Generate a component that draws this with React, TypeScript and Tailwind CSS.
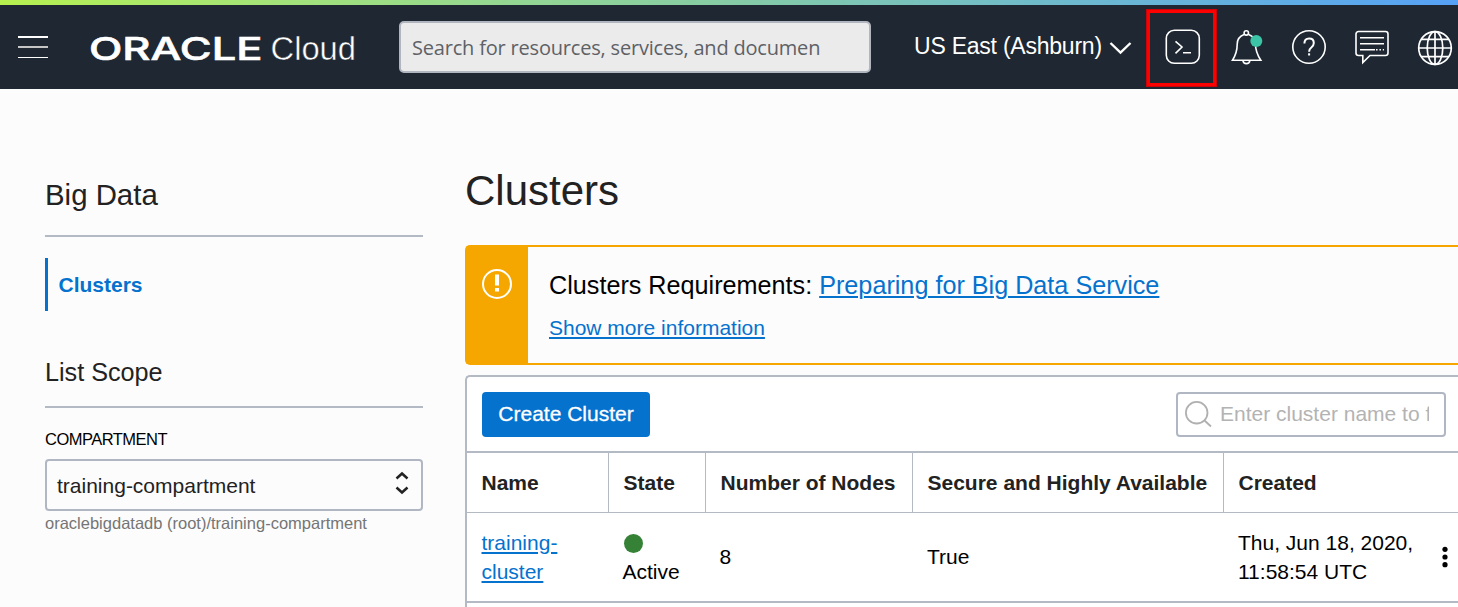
import type { ReactNode } from 'react';

function OracleLogo() {
  return (
    <svg width="268" height="36" viewBox="0 0 268 36" fill="#ffffff" role="img" aria-label="Oracle Cloud" className="shrink-0">
      <text x="-1" y="30.500" fontFamily="Inter, sans-serif" fontWeight="500" fontSize="31" stroke="#ffffff" strokeWidth="0.600" textLength="173.500" lengthAdjust="spacingAndGlyphs">
        ORACLE
      </text>
      <text x="180.500" y="30.800" fontFamily="'Liberation Sans', sans-serif" fontSize="34" stroke="#1e2732" strokeWidth="0.500" textLength="85.500" lengthAdjust="spacingAndGlyphs">
        Cloud
      </text>
    </svg>
  );
}

function TerminalIcon() {
  return (
    <svg width="36" height="36" viewBox="0 0 36 36" fill="none" stroke="#ffffff" strokeWidth="1.6">
      <rect x="1.3" y="1.3" width="33" height="33" rx="8" />
      <path d="M10.5 12.3 17 18 10.5 24.4M18 23.8h8" />
    </svg>
  );
}

function BellIcon() {
  return (
    <svg width="34" height="36" viewBox="0 0 34 36" fill="none" stroke="#ffffff" strokeWidth="1.6">
      <circle cx="16.3" cy="3.9" r="2.2" />
      <path d="M14 5.600C9.500 7.300 7.200 10.800 7.200 15.300c0 7-1.500 11-4.700 15.900h28.300C27.500 26.300 25.500 22.300 25.500 15.300c0-4.500-2.300-8-6.800-9.700" />
      <path d="M12.900 31.300c.3 2.300 1.600 3.300 3.500 3.300s3.200-1 3.500-3.300" />
      <circle cx="26.300" cy="12" r="6" fill="#3bc4a5" stroke="none" />
    </svg>
  );
}

function HelpIcon() {
  return (
    <svg width="36" height="36" viewBox="0 0 36 36" fill="none" stroke="#ffffff" strokeWidth="1.6">
      <circle cx="18" cy="18" r="16.200" />
      <path strokeWidth="2" d="M13.400 14.600c0-3.200 1.900-5 4.700-5s4.700 1.800 4.700 4.400c0 2.200-1.100 3.300-2.500 4.500-1.500 1.200-2.200 2.100-2.200 4.200" />
      <path strokeWidth="2" d="M18.100 24.300v2.200" />
    </svg>
  );
}

function ChatIcon() {
  return (
    <svg width="36" height="36" viewBox="0 0 36 36" fill="none" stroke="#ffffff" strokeWidth="1.6">
      <path d="M4.500 2.500h27a2.500 2.500 0 0 1 2.500 2.500v19a2.500 2.500 0 0 1-2.500 2.500H16l-7.200 7v-7H4.500A2.500 2.500 0 0 1 2 24V5a2.500 2.500 0 0 1 2.500-2.500Z" />
      <path d="M6 8.700h24M6 14.700h24M6 20.700h15" />
      <path strokeDasharray="1.600 1.800" d="M22 20.700h8" />
    </svg>
  );
}

function GlobeIcon() {
  return (
    <svg width="36" height="36" viewBox="0 0 36 36" fill="none" stroke="#ffffff" strokeWidth="1.7">
      <circle cx="18" cy="18" r="16.300" />
      <ellipse cx="18" cy="18" rx="7.800" ry="16.300" />
      <path d="M1.700 18h32.600M4.300 9.300h27.400M4.300 26.700h27.400M18 1.700v32.600" />
    </svg>
  );
}

function TopBar() {
  return (
    <header className="shrink-0">
      <div className="h-[5px] bg-linear-to-r from-[#b6f04e] via-[#86cba5] to-[#56a1f6]" />
      <div className="flex h-[84px] items-center bg-[#1e2732] pl-[18px]">
        <div className="flex w-[30px] shrink-0 flex-col gap-[8.500px]">
          <div className="h-[1.500px] bg-white" />
          <div className="h-[2px] bg-[#c4c5c4]" />
          <div className="h-[1.500px] bg-white" />
        </div>
        <div className="ml-[42px] flex">
          <OracleLogo />
        </div>
        <div className="ml-[41px] flex h-[52px] w-[472px] shrink-0 items-center rounded-[5px] border-2 border-[#b0b5bf] bg-[#ebebeb] pt-[2px] pl-[11px] font-['Open_Sans',sans-serif] text-[20px] tracking-[-0.190px] whitespace-nowrap text-[#5e6166]">
          Search for resources, services, and documen
        </div>
        <div className="ml-[43px] flex shrink-0 items-center pb-[2px]">
          <span className="w-[189px] text-[23px] tracking-[-0.230px] whitespace-nowrap text-white">US East (Ashburn)</span>
          <svg width="23" height="14" viewBox="0 0 23 14" fill="none" stroke="#ffffff" strokeWidth="2.400" className="mt-[3px] ml-[5.500px]">
            <path d="m1.500 2 10 9.500L21.500 2" />
          </svg>
        </div>
        <div className="mt-[2px] ml-[14.500px] flex h-[78px] w-[71px] shrink-0 items-center justify-center border-4 border-[#ff0000] pb-[2px] pl-[3px] outline-1 -outline-offset-1 outline-[#c8050a]">
          <TerminalIcon />
        </div>
        <div className="ml-[13px] flex shrink-0 items-center">
          <BellIcon />
          <div className="ml-[27px]"><HelpIcon /></div>
          <div className="ml-[27px]"><ChatIcon /></div>
          <div className="mt-[1px] ml-[27px]"><GlobeIcon /></div>
        </div>
      </div>
    </header>
  );
}

function Sidebar() {
  return (
    <aside className="ml-[45px] w-[378px] shrink-0 pt-[88px] text-[#222222]">
      <h2 className="h-[58px] text-[29.400px] leading-[36px]">Big Data</h2>
      <div className="h-[2px] bg-[#b4bac4]" />
      <div className="mt-[21px] flex h-[53px] items-center border-l-[3px] border-[#0572ce] pt-px pl-[10.500px] text-[21px] font-bold text-[#0572ce]">
        Clusters
      </div>
      <h3 className="mt-[45px] h-[50px] text-[25.200px] leading-[32px]">List Scope</h3>
      <div className="h-[2px] bg-[#b4bac4]" />
      <div className="mt-[19px] h-[32px] text-[16.500px] leading-[24px] tracking-[-0.520px] text-black">COMPARTMENT</div>
      <div className="flex h-[52px] items-center justify-between rounded-[4px] border-2 border-[#b0b7c3] pr-[11px] pl-[10px]">
        <span className="pt-px text-[21px]">training-compartment</span>
        <svg width="16" height="24" viewBox="0 0 16 24" fill="none" stroke="#222222" strokeWidth="2.500" className="-mt-[5px]">
          <path d="m2.500 7.500 5.500-5L13.500 7.500M2.500 16.500 8 21.500 13.500 16.500" />
        </svg>
      </div>
      <div className="text-[16.500px] leading-[24px] whitespace-nowrap text-[#757575]">
        oraclebigdatadb (root)/training-compartment
      </div>
    </aside>
  );
}

function Notice() {
  return (
    <section className="mt-[30px] flex h-[120px] rounded-l-[5px] border-2 border-r-0 border-[#f5a700]">
      <div className="flex w-[61px] shrink-0 justify-center bg-[#f5a700] pt-[21px] pr-px">
        <svg width="32" height="32" viewBox="0 0 32 32" fill="none" stroke="#ffffff">
          <circle cx="16" cy="16" r="14" strokeWidth="2" />
          <path strokeWidth="4" d="M16 6.500v11M16 20v3.600" />
        </svg>
      </div>
      <div className="pt-[22px] pl-[21px] text-black">
        <p className="text-[25.200px] leading-[32px]">
          Clusters Requirements:{' '}
          <a className="text-[#0572ce] underline decoration-2 underline-offset-2">Preparing for Big Data Service</a>
        </p>
        <a className="mt-[13px] block text-[21px] leading-[28px] text-[#0572ce] underline decoration-2 underline-offset-2">
          Show more information
        </a>
      </div>
    </section>
  );
}

const columns = 'grid grid-cols-[142px_97px_207px_311px_236px]';

function HeadCell({ children, last = false }: { children: ReactNode; last?: boolean }) {
  return (
    <div className={last ? 'flex items-center pl-[14.500px]' : 'flex items-center border-r border-[#b4bac4] pl-[14.500px]'}>
      {children}
    </div>
  );
}

function ClusterTable() {
  return (
    <section className="mt-[10px] flex flex-1 flex-col rounded-tl-[5px] border-t-2 border-l-2 border-[#b4bac4] bg-white">
      <div className="flex h-[76px] shrink-0 items-start justify-between border-b-2 border-[#b4bac4] pt-[15px] pr-[12px] pl-[15px]">
        <button className="h-[45px] w-[168px] rounded-[4px] bg-[#0572ce] pb-[2px] text-[21px] text-white [-webkit-text-stroke:0.300px_white]">
          Create Cluster
        </button>
        <div className="flex h-[45px] w-[270px] items-center rounded-[4px] border-2 border-[#b0b7c3] pl-[6px]">
          <svg width="30" height="30" viewBox="0 0 30 30" fill="none" stroke="#b0b0b0" strokeWidth="1.800" className="shrink-0">
            <circle cx="12.700" cy="12.700" r="10.800" />
            <path d="m20.500 20.500 6.500 6" />
          </svg>
          <span className="ml-[6px] w-[209px] overflow-hidden pb-px text-[21px] whitespace-nowrap text-[#b3b3b3]">
            Enter cluster name to filter
          </span>
        </div>
      </div>
      <div className={`${columns} h-[60px] shrink-0 border-b border-[#b4bac4] text-[21px] font-bold whitespace-nowrap text-[#222222]`}>
        <HeadCell>Name</HeadCell>
        <HeadCell>State</HeadCell>
        <HeadCell>Number of Nodes</HeadCell>
        <HeadCell>Secure and Highly Available</HeadCell>
        <HeadCell last>Created</HeadCell>
      </div>
      <div className={`${columns} h-[90px] shrink-0 items-center border-b-2 border-[#b4bac4] text-[21px] leading-[29px] text-black`}>
        <a className="pb-px pl-[14.500px] text-[#0572ce] underline decoration-2 underline-offset-2">
          training-
          <br />
          cluster
        </a>
        <div className="pb-px pl-[13.500px]">
          <div className="flex h-[29px] items-center pt-[2px] pl-[1.500px]">
            <div className="size-[19px] rounded-full bg-[#358237]" />
          </div>
          Active
        </div>
        <div className="pb-[2px] pl-[13.500px]">8</div>
        <div className="pb-[2px] pl-[14px]">True</div>
        <div className="flex items-center justify-between pl-[14px]">
          <div className="pb-px whitespace-nowrap">
            Thu, Jun 18, 2020,
            <br />
            11:58:54 UTC
          </div>
          <svg width="6" height="24" viewBox="0 0 6 24" fill="#000000" className="mr-[12px]">
            <circle cx="3" cy="4.300" r="2.600" />
            <circle cx="3" cy="12" r="2.600" />
            <circle cx="3" cy="19.700" r="2.600" />
          </svg>
        </div>
      </div>
    </section>
  );
}

export default function App() {
  return (
    <div className="flex h-[607px] w-[1458px] flex-col overflow-hidden bg-[#fcfcfc] font-['Liberation_Sans',Arial,sans-serif]">
      <TopBar />
      <div className="flex min-h-0 flex-1">
        <Sidebar />
        <main className="ml-[42px] flex min-w-0 flex-1 flex-col pt-[78px]">
          <h1 className="text-[42px] leading-[48px] text-[#222222]">Clusters</h1>
          <Notice />
          <ClusterTable />
        </main>
      </div>
    </div>
  );
}
